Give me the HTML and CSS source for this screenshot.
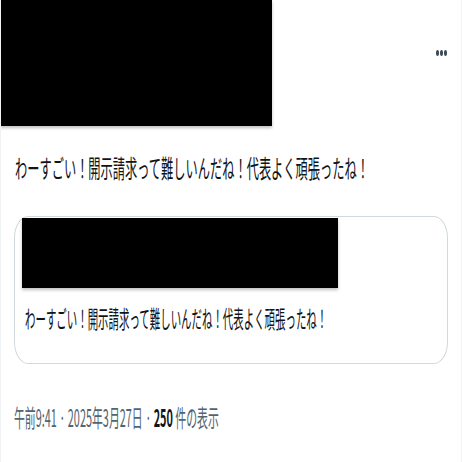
FILE: index.html
```html
<!DOCTYPE html>
<html lang="ja">
<head>
    <meta charset="UTF-8">
    <meta name="viewport" content="width=device-width, initial-scale=1.0">
    <title>Post</title>
    <link rel="stylesheet" href="styles.css">
</head>
<body>
    <div class="page">
        <div class="header">
            <div class="cover"></div>
            <div class="more"><span></span><span></span><span></span></div>
        </div>
        <div class="post-text"><span class="squish">わーすごい！開示請求って難しいんだね！代表よく頑張ったね！</span></div>
        <div class="card">
            <div class="card-cover"></div>
            <div class="card-text"><span class="squish">わーすごい！開示請求って難しいんだね！代表よく頑張ったね！</span></div>
        </div>
        <div class="meta"><span class="squish">午前9:41 · 2025年3月27日 · <b>250</b> 件の表示</span></div>
    </div>
</body>
</html>
```
FILE: styles.css
```css
body {
    margin: 0;
    background: #ffffff;
    font-family: "Noto Sans CJK JP", "Liberation Sans", sans-serif;
    color: #0f1419;
}
.page {
    width: 462px;
    height: 462px;
    box-sizing: border-box;
    border-left: 1px solid #eff3f4;
    border-right: 1px solid #eff3f4;
    overflow: hidden;
}
.header {
    display: flex;
    justify-content: space-between;
    align-items: flex-start;
}
.cover {
    width: 272px;
    height: 126px;
    margin-left: -1px;
    background: #000;
    box-shadow: 0 2px 3px rgba(0, 0, 0, 0.25);
}
.more {
    display: flex;
    gap: 1.2px;
    margin-top: 50px;
    margin-right: 14px;
}
.more span {
    width: 3px;
    height: 6px;
    border-radius: 50%;
    background: #3d4a55;
}
.squish {
    display: inline-block;
    white-space: nowrap;
    transform-origin: left center;
}
.post-text {
    margin: 26px 0 0 14px;
    font-size: 25px;
    line-height: 30px;
}
.post-text .squish {
    transform: scaleX(0.489);
}
.card {
    margin: 34px 13px 0 13px;
    height: 148px;
    box-sizing: border-box;
    border: 1px solid #cfd9de;
    border-radius: 14px / 22px;
    padding: 1px 0 0 7px;
}
.card-cover {
    width: 316px;
    height: 70px;
    background: #000;
    box-shadow: 0 2px 3px rgba(0, 0, 0, 0.25);
}
.card-text {
    margin: 16px 0 0 3px;
    font-size: 24px;
    line-height: 28px;
}
.card-text .squish {
    transform: scaleX(0.435);
}
.meta {
    margin: 39px 0 0 13px;
    font-size: 24px;
    line-height: 28px;
    color: #536471;
}
.meta b {
    color: #0f1419;
    font-weight: 700;
}
.meta .squish {
    transform: scaleX(0.453);
}
```
